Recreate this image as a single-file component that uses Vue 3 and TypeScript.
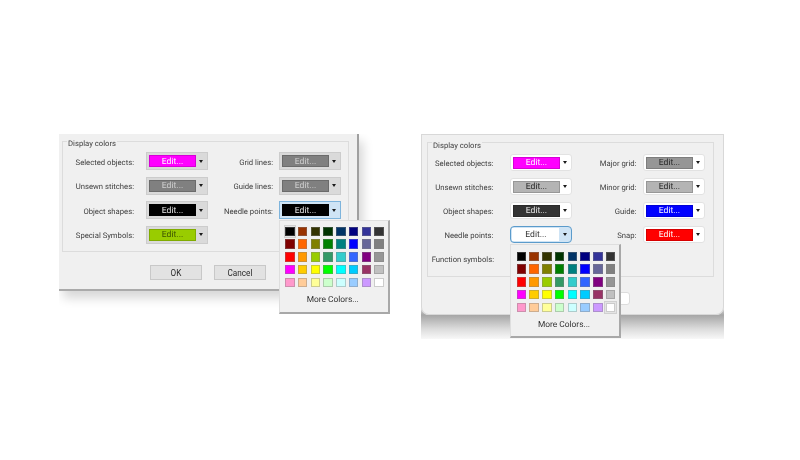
<script setup lang="ts">
interface Row {
  label: string
  color?: string
  text?: string
  active?: boolean
}
interface Shot {
  id: string
  rows: Row[]
}

const palette: string[][] = [
  ['#000000', '#993300', '#333300', '#003300', '#003366', '#000080', '#333399', '#333333'],
  ['#800000', '#ff6600', '#808000', '#008000', '#008080', '#0000ff', '#666699', '#808080'],
  ['#ff0000', '#ff9900', '#99cc00', '#339966', '#33cccc', '#3366ff', '#800080', '#969696'],
  ['#ff00ff', '#ffcc00', '#ffff00', '#00ff00', '#00ffff', '#00ccff', '#993366', '#c0c0c0'],
  ['#ff99cc', '#ffcc99', '#ffff99', '#ccffcc', '#ccffff', '#99ccff', '#cc99ff', '#ffffff'],
]

const shots: Shot[] = [
  {
    id: 'old',
    rows: [
      { label: 'Selected objects:', color: '#ff00ff', text: '#ffffff' },
      { label: 'Grid lines:', color: '#808080', text: '#d0d0d0' },
      { label: 'Unsewn stitches:', color: '#808080', text: '#d0d0d0' },
      { label: 'Guide lines:', color: '#808080', text: '#d0d0d0' },
      { label: 'Object shapes:', color: '#000000', text: '#e8e8e8' },
      { label: 'Needle points:', color: '#000000', text: '#e8e8e8', active: true },
      { label: 'Special Symbols:', color: '#99cc00', text: '#3c5000' },
    ],
  },
  {
    id: 'new',
    rows: [
      { label: 'Selected objects:', color: '#ff00ff', text: '#ffffff' },
      { label: 'Major grid:', color: '#969696', text: '#262626' },
      { label: 'Unsewn stitches:', color: '#b4b4b4', text: '#262626' },
      { label: 'Minor grid:', color: '#b4b4b4', text: '#262626' },
      { label: 'Object shapes:', color: '#333333', text: '#e8e8e8' },
      { label: 'Guide:', color: '#0000ff', text: '#ffffff' },
      { label: 'Needle points:', color: '#ffffff', text: '#333333', active: true },
      { label: 'Snap:', color: '#ff0000', text: '#ffffff' },
      { label: 'Function symbols:' },
    ],
  },
]

const isSelected = (shot: Shot, r: number, c: number): boolean =>
  shot.id === 'old' ? r === 0 && c === 0 : r === 4 && c === 7
</script>

<template>
  <main class="canvas">
    <section v-for="shot in shots" :key="shot.id" class="shot" :class="shot.id">
      <div class="window">
        <div class="group">
          <span class="legend">Display colors</span>
          <div class="grid">
            <div v-for="row in shot.rows" :key="row.label" class="field">
              <span class="label">{{ row.label }}</span>
              <div v-if="row.color" class="picker" :class="{ active: row.active }">
                <span class="block" :style="{ background: row.color, color: row.text }">Edit...</span>
                <span class="drop"><i class="caret"></i></span>
              </div>
            </div>
          </div>
        </div>
        <div class="actions">
          <button class="btn">OK</button>
          <button class="btn">Cancel</button>
        </div>
      </div>

      <div class="popup">
        <div class="swatches">
          <template v-for="(line, r) in palette" :key="r">
            <span
              v-for="(hex, c) in line"
              :key="hex + c"
              class="cell"
              :class="{ selected: isSelected(shot, r, c) }"
            >
              <span class="swatch" :style="{ background: hex }"></span>
            </span>
          </template>
        </div>
        <div class="more">More Colors...</div>
      </div>
    </section>
  </main>
</template>

<style>
html,
body {
  margin: 0;
  background: #ffffff;
}
</style>

<style scoped>
.canvas {
  position: relative;
  width: 800px;
  height: 460px;
  overflow: hidden;
  background: #ffffff;
  font-family: Roboto, "Noto Sans", sans-serif;
  font-size: 7.7px;
  text-rendering: geometricPrecision;
  color: #404040;
  filter: blur(0.5px);
}

/* the two pasted screenshots sit freely on the page */
.shot {
  position: absolute;
  top: 134px;
}
.shot.old {
  left: 59px;
  width: 300px;
  height: 157px;
}
.shot.new {
  left: 421px;
  width: 303px;
  height: 205px;
  background: linear-gradient(#ffffff 0, #ffffff 170px, #a6a6a6 181px, #dcdcdc 195px, #f8f8f8 205px);
}

.window {
  box-sizing: border-box;
  height: 100%;
  background: #f0f0f0;
}
.old .window {
  padding: 7px 0 0 3px;
  border-right: 2px solid #a0a0a0;
  border-bottom: 2px solid #aaaaaa;
  box-shadow: 4px 7px 10px rgba(0, 0, 0, 0.16);
  clip-path: inset(0 -20px -20px 0);
}
.new .window {
  height: 181px;
  padding: 8px 0 0 6px;
  border-radius: 0 0 8px 8px;
  box-shadow: inset 0 0 0 1px #d8d8d8;
}

.group {
  position: relative;
  box-sizing: border-box;
  border: 1px solid #dcdcdc;
}
.old .group {
  width: 287px;
  height: 111px;
  padding: 10px 0 0 1px;
}
.new .group {
  width: 287px;
  height: 135px;
  padding: 11px 0 0 1px;
}

.legend {
  position: absolute;
  top: -4px;
  left: 4px;
  padding: 0 1px;
  line-height: 11px;
  background: #f0f0f0;
}
.new .legend {
  top: -3px;
}

.grid {
  display: grid;
  align-items: center;
}
.old .grid {
  grid-template-columns: 144px 133px;
  grid-auto-rows: 18px;
  row-gap: 6.6px;
}
.new .grid {
  grid-template-columns: 143px 133px;
  grid-auto-rows: 17px;
  row-gap: 7px;
}

.field {
  display: flex;
  align-items: center;
}
.label {
  text-align: right;
  white-space: nowrap;
  padding-top: 2px;
}
.old .field:nth-child(odd) .label {
  width: 70px;
  margin-right: 12px;
}
.old .field:nth-child(even) .label {
  width: 65px;
  margin-right: 6px;
}
.new .field:nth-child(odd) .label {
  width: 65px;
  margin-right: 17px;
}
.new .field:nth-child(even) .label {
  width: 65px;
  margin-right: 7px;
}

.picker {
  display: flex;
  box-sizing: border-box;
  width: 62px;
  height: 18px;
  padding: 2px;
  background: #dadada;
  border: 1px solid #cccccc;
}
.new .picker {
  height: 17px;
  background: #ffffff;
  border: 1px solid #e2e2e2;
  border-radius: 3px;
  padding: 1.5px;
}
.old .picker.active {
  background: #cfe4f5;
  border-color: #7eb4dc;
}
.new .picker.active {
  background: #cfe4f5;
  border: 1.5px solid #5b9bcb;
  border-radius: 4px;
  padding: 1px;
}

.block {
  box-sizing: border-box;
  display: flex;
  align-items: center;
  justify-content: center;
  width: 47px;
  height: 100%;
  padding-top: 1px;
  border: 1px solid rgba(0, 0, 0, 0.16);
  font-size: 8.6px;
}
.new .picker.active .block {
  border-color: #ffffff;
}
.drop {
  flex: 1;
  display: flex;
  align-items: center;
  justify-content: center;
}
.caret {
  width: 0;
  height: 0;
  border-left: 2.5px solid transparent;
  border-right: 2.5px solid transparent;
  border-top: 3px solid #1a1a1a;
}

.actions {
  display: flex;
}
.old .actions {
  gap: 12px;
  padding: 13px 0 0 88px;
}
.new .actions {
  gap: 12px;
  padding: 15px 0 0 87px;
}
.btn {
  box-sizing: border-box;
  width: 52px;
  height: 15px;
  padding: 0;
  background: #e2e2e2;
  border: 1px solid #c8c8c8;
  font: inherit;
  font-size: 8.2px;
  color: #2a2a2a;
}
.new .btn {
  background: #ffffff;
  border: 1px solid #dcdcdc;
  border-radius: 3px;
  height: 13px;
}

/* dropdown palette lying over the dialog */
.popup {
  position: absolute;
  box-sizing: border-box;
  width: 111px;
  height: 94px;
  background: #f0f0f0;
  border: 1px solid #dedede;
  border-right: 2px solid #a8a8a8;
  border-bottom: 2px solid #a8a8a8;
}
.old .popup {
  left: 220px;
  top: 86px;
  padding: 4px 0 0 3.5px;
}
.new .popup {
  left: 89px;
  top: 110px;
  padding: 5px 0 0 4px;
}

.swatches {
  display: grid;
  grid-template-columns: repeat(8, 12.75px);
  grid-auto-rows: 12.75px;
}
.cell {
  display: flex;
  align-items: center;
  justify-content: center;
}
.cell.selected {
  background: #e4e4e4;
  box-shadow: inset 0 0 0 1px #d0d0d0;
}
.swatch {
  box-sizing: border-box;
  width: 9.5px;
  height: 9.5px;
  border: 1px solid rgba(128, 128, 128, 0.4);
}
.more {
  margin: 6px 6px 0 0;
  text-align: center;
  font-size: 8.4px;
  color: #333333;
}
</style>
